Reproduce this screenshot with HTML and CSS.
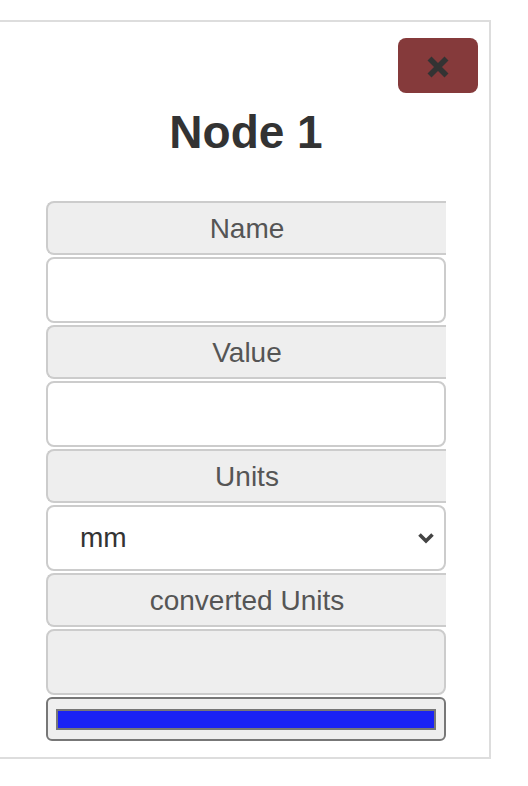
FILE: index.html
```html
<!DOCTYPE html>
<html>
<head>
<meta charset="utf-8">
<link rel="stylesheet" href="styles.css">
</head>
<body>
<div class="panel">
  <div class="panel-head">
    <button class="close-btn" type="button" aria-label="Close">
      <svg width="22" height="22" viewBox="0 0 22 22"><path d="M4.5 4.5 L17.5 17.5 M17.5 4.5 L4.5 17.5" stroke="#333" stroke-width="5.6" stroke-linecap="square" fill="none"/></svg>
    </button>
  </div>
  <h1 class="title">Node 1</h1>
  <div class="form">
    <div class="addon">Name</div>
    <div class="field"></div>
    <div class="addon">Value</div>
    <div class="field"></div>
    <div class="addon">Units</div>
    <div class="field select">
      <span>mm</span>
      <svg width="18" height="12" viewBox="0 0 18 12"><path d="M2.5 2.5 L9 9 L15.5 2.5" stroke="#444" stroke-width="3.6" fill="none"/></svg>
    </div>
    <div class="addon">converted Units</div>
    <div class="field output"></div>
    <div class="progress"><div class="bar"></div></div>
  </div>
</div>
</body>
</html>
```
FILE: styles.css
```css
html, body {
  margin: 0;
  padding: 0;
  background: #fff;
}
body {
  font-family: "Liberation Sans", Arial, Helvetica, sans-serif;
  overflow: hidden;
}
.panel {
  box-sizing: border-box;
  width: 501px;
  margin: 20px 0 0 -10px;
  border: 2px solid #dddddd;
  padding: 16px 11px 16px 54px;
  background: #fff;
}
.panel-head {
  display: flex;
  justify-content: flex-end;
}
.close-btn {
  box-sizing: border-box;
  width: 80px;
  height: 55px;
  border: none;
  border-radius: 8px;
  background: #853a3b;
  display: flex;
  align-items: center;
  justify-content: center;
  padding: 2px 0 0 0;
  margin: 0;
}
.close-btn svg {
  display: block;
}
.title {
  width: 400px;
  margin: 11px 0 41px 0;
  font-size: 46px;
  line-height: 56px;
  font-weight: bold;
  color: #333;
  text-align: center;
}
.form {
  width: 400px;
  display: flex;
  flex-direction: column;
  gap: 2px;
}
.addon {
  box-sizing: border-box;
  height: 54px;
  background: #eeeeee;
  border: 2px solid #cccccc;
  border-right: none;
  border-radius: 8px 0 0 8px;
  color: #555;
  font-size: 28px;
  padding-top: 2px;
  display: flex;
  align-items: center;
  justify-content: center;
}
.field {
  box-sizing: border-box;
  height: 66px;
  background: #fff;
  border: 2px solid #cccccc;
  border-radius: 8px;
}
.select {
  display: flex;
  align-items: center;
  justify-content: space-between;
  padding: 0 9px 0 32px;
  font-size: 28px;
  color: #333;
}
.output {
  background: #eeeeee;
}
.progress {
  box-sizing: border-box;
  height: 44px;
  border: 2px solid #777;
  border-radius: 6px;
  background: #efefef;
  padding: 10px 8px 9px 8px;
}
.bar {
  box-sizing: border-box;
  height: 21px;
  border: 2px solid #777;
  background: #1a22f5;
}
```
